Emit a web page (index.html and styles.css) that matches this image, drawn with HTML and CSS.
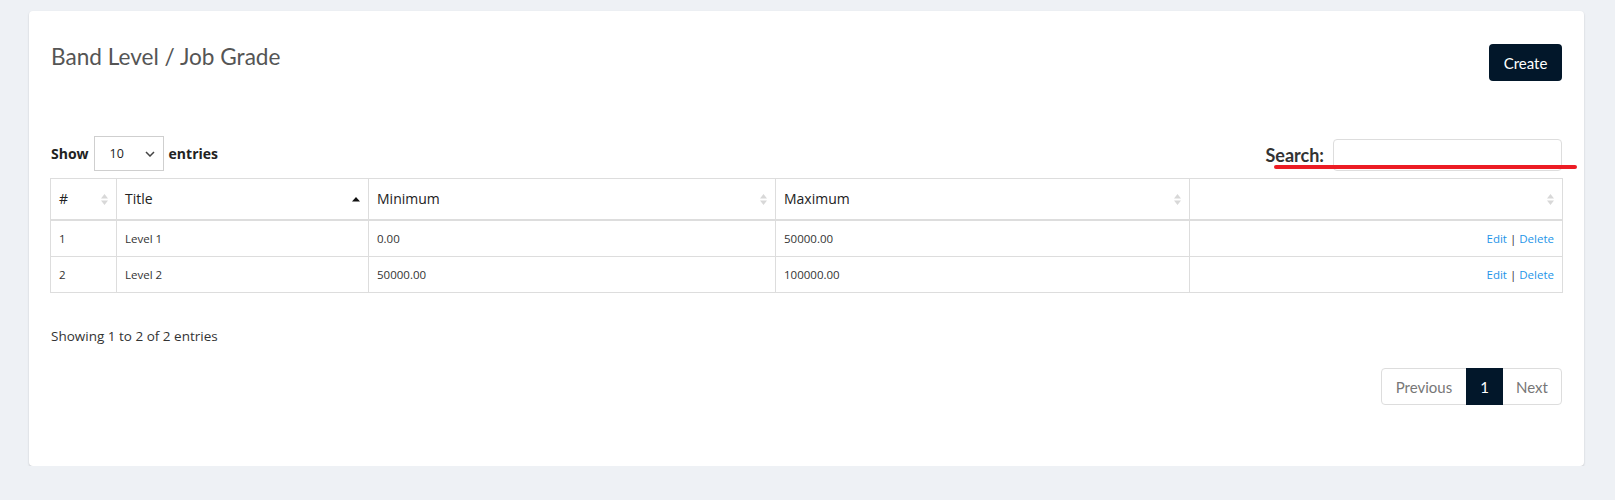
FILE: index.html
```html
<!DOCTYPE html>
<html lang="en">
<head>
<meta charset="utf-8">
<title>Band Level / Job Grade</title>
<link rel="stylesheet" href="styles.css">
</head>
<body>
<div class="card">
  <div class="card-head">
    <h1 class="title">Band Level / Job Grade</h1>
    <button class="btn-create">Create</button>
  </div>

  <div class="controls">
    <div class="length">
      <span class="lbl">Show</span>
      <span class="select">
        <span class="select-val">10</span>
        <svg class="chev" width="10" height="6" viewBox="0 0 10 6"><path d="M1 1l4 4 4-4" fill="none" stroke="#444" stroke-width="1.5"/></svg>
      </span>
      <span class="lbl">entries</span>
    </div>
    <div class="search">
      <span class="search-lbl">Search:</span>
      <span class="search-input"></span>
    </div>
  </div>

  <table class="grid">
    <colgroup>
      <col class="c1"><col class="c2"><col class="c3"><col class="c4"><col class="c5">
    </colgroup>
    <thead>
      <tr>
        <th><div class="th-in"><span>#</span><svg class="sort" width="7" height="11" viewBox="0 0 7 11"><path d="M3.5 0L7 4.5H0z M3.5 11L0 6.5h7z" fill="#d8d8d8"/></svg></div></th>
        <th><div class="th-in"><span>Title</span><svg class="sort" width="8" height="11" viewBox="0 0 8 11"><path d="M4 3L8 7.5H0z" fill="#111"/></svg></div></th>
        <th><div class="th-in"><span>Minimum</span><svg class="sort" width="7" height="11" viewBox="0 0 7 11"><path d="M3.5 0L7 4.5H0z M3.5 11L0 6.5h7z" fill="#d8d8d8"/></svg></div></th>
        <th><div class="th-in"><span>Maximum</span><svg class="sort" width="7" height="11" viewBox="0 0 7 11"><path d="M3.5 0L7 4.5H0z M3.5 11L0 6.5h7z" fill="#d8d8d8"/></svg></div></th>
        <th><div class="th-in"><span></span><svg class="sort" width="7" height="11" viewBox="0 0 7 11"><path d="M3.5 0L7 4.5H0z M3.5 11L0 6.5h7z" fill="#d8d8d8"/></svg></div></th>
      </tr>
    </thead>
    <tbody>
      <tr>
        <td>1</td><td>Level 1</td><td>0.00</td><td>50000.00</td>
        <td class="act"><a href="#">Edit</a> | <a href="#">Delete</a></td>
      </tr>
      <tr>
        <td>2</td><td>Level 2</td><td>50000.00</td><td>100000.00</td>
        <td class="act"><a href="#">Edit</a> | <a href="#">Delete</a></td>
      </tr>
    </tbody>
  </table>

  <div class="info">Showing 1 to 2 of 2 entries</div>

  <div class="pager">
    <span class="pg pg-prev">Previous</span>
    <span class="pg pg-active">1</span>
    <span class="pg pg-next">Next</span>
  </div>

  <div class="redline"></div>
</div>
</body>
</html>
```

FILE: styles.css
```css
* { box-sizing: border-box; }

body {
  margin: 0;
  background: #eef1f5;
  font-family: "Open Sans", "Noto Sans", sans-serif;
  color: #333;
}

.card {
  position: relative;
  margin: 11px 0 0 29px;
  width: 1555px;
  height: 455px;
  background: #fff;
  border-radius: 4px;
  box-shadow: 0 1px 2px rgba(0, 0, 0, 0.18);
  padding: 33px 22px 0 21px;
  display: flex;
  flex-direction: column;
}

.card-head {
  display: flex;
  justify-content: space-between;
  align-items: flex-start;
  height: 37px;
  padding-left: 1px;
}

.title {
  margin: 0;
  font-family: Lato, sans-serif;
  font-weight: 400;
  font-size: 22.6px;
  line-height: 26px;
  color: #555;
}

.btn-create {
  width: 73px;
  height: 37px;
  border: 0;
  border-radius: 4px;
  background: #02172a;
  color: #fff;
  font-family: Lato, sans-serif;
  font-size: 15px;
  padding: 0;
}

.controls {
  margin-top: 55px;
  display: flex;
  justify-content: space-between;
  align-items: center;
  height: 35px;
  padding-left: 1px;
}

.length {
  display: flex;
  align-items: center;
  gap: 5px;
}

.lbl {
  font-weight: 700;
  font-size: 14px;
  color: #222;
}

.select {
  width: 70px;
  height: 35px;
  border: 1px solid #cfcfcf;
  display: flex;
  align-items: center;
  justify-content: space-between;
  padding: 0 8px 0 15px;
  font-size: 12.5px;
  color: #222;
}

.search {
  display: flex;
  align-items: center;
  gap: 9px;
  padding-top: 2px;
}

.search-lbl {
  font-family: Lato, sans-serif;
  font-weight: 700;
  font-size: 18px;
  color: #333;
}

.search-input {
  width: 229px;
  height: 32px;
  border: 1px solid #ddd;
  border-radius: 4px;
}

.grid {
  margin-top: 7px;
  width: 1512px;
  border-collapse: collapse;
  table-layout: fixed;
  border: 1px solid #ddd;
}

.c1 { width: 66px; }
.c2 { width: 252px; }
.c3 { width: 407px; }
.c4 { width: 414px; }
.c5 { width: 373px; }

.grid th {
  border: 1px solid #ddd;
  border-bottom: 2px solid #ddd;
  padding: 10px 8px 10px 8px;
  font-weight: 400;
  font-size: 14px;
  line-height: 20px;
  text-align: left;
  color: #222;
}

.th-in {
  display: flex;
  justify-content: space-between;
  align-items: center;
}

.grid td {
  border: 1px solid #ddd;
  padding: 9px 8px 9px;
  font-size: 11.5px;
  line-height: 17px;
  color: #333;
}

.grid td.act {
  text-align: right;
  color: #333;
}

.act a {
  color: #1e95e8;
  text-decoration: none;
}

.info {
  margin-top: 33px;
  padding-left: 1px;
  font-size: 13.5px;
  line-height: 20px;
  color: #333;
}

.pager {
  margin-top: 22px;
  align-self: flex-end;
  display: flex;
  height: 37px;
  border: 1px solid #ddd;
  border-radius: 4px;
}

.pg {
  display: flex;
  align-items: center;
  justify-content: center;
  font-family: Lato, sans-serif;
  font-size: 15px;
  color: #777;
  height: 35px;
}

.pg-prev { width: 84px; }
.pg-active {
  width: 37px;
  height: 37px;
  margin-top: -1px;
  background: #02172a;
  color: #fff;
}
.pg-next { width: 58px; }

.redline {
  position: absolute;
  left: 1245px;
  top: 154px;
  width: 303px;
  height: 4px;
  border-radius: 2px;
  background: #ec1c24;
}
```
